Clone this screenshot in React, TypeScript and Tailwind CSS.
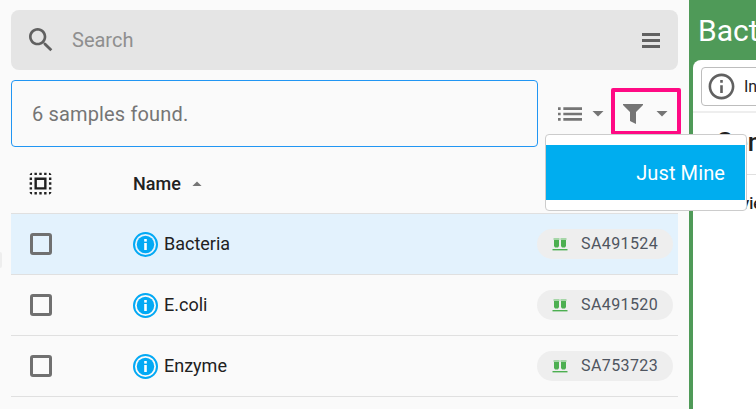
import React from 'react';

const samples = [
  { name: 'Bacteria', id: 'SA491524', selected: true },
  { name: 'E.coli', id: 'SA491520', selected: false },
  { name: 'Enzyme', id: 'SA753723', selected: false },
];

const Arrow = ({ className = '' }: { className?: string }) => (
  <svg viewBox="0 0 12 6" className={`w-[12px] h-[6px] shrink-0 ${className}`} fill="#757575">
    <path d="M0.5 0h11L6 5.5z" />
  </svg>
);

const InfoBadge = () => (
  <svg viewBox="0 0 25 25" className="w-[25px] h-[25px] shrink-0">
    <circle cx="12.5" cy="12.5" r="11.5" fill="none" stroke="#03a9f4" strokeWidth="2" />
    <circle cx="12.5" cy="12.5" r="8.7" fill="#03a9f4" />
    <rect x="11.2" y="11" width="2.6" height="7" fill="#fff" />
    <rect x="11.2" y="7" width="2.6" height="2.6" fill="#fff" />
  </svg>
);

const Tubes = () => (
  <svg viewBox="0 0 16 14" className="w-[16px] h-[14px] shrink-0">
    <path d="M2 3h5v6l-1 1.5H3L2 9zM9 3h5v6l-1 1.5h-3L9 9z" fill="#4caf50" />
    <rect x="1.5" y="1" width="6" height="2" fill="#a5d6a7" />
    <rect x="8.5" y="1" width="6" height="2" fill="#a5d6a7" />
    <rect x="0.5" y="12" width="15" height="1.4" fill="#4caf50" />
  </svg>
);

export default function App() {
  return (
    <div className="relative flex w-[756px] h-[409px] overflow-hidden bg-[#fafafa] font-['Roboto',sans-serif]">
      <div className="w-[689px] shrink-0 px-[11px] pt-[10px]">
        <div className="flex items-center h-[60px] rounded-[8px] bg-[#e5e5e5] pl-[14px] pr-[18px]">
          <svg viewBox="0 0 24 24" className="w-[32px] h-[32px] shrink-0" fill="#616161">
            <path d="M15.5 14h-.79l-.28-.27C15.41 12.59 16 11.11 16 9.5 16 5.91 13.09 3 9.5 3S3 5.91 3 9.5 5.91 16 9.5 16c1.61 0 3.09-.59 4.23-1.57l.27.28v.79l5 4.99L20.49 19l-4.99-5zm-6 0C7.01 14 5 11.99 5 9.5S7.01 5 9.5 5 14 7.01 14 9.5 11.99 14 9.5 14z" />
          </svg>
          <span className="ml-[15px] flex-1 text-[20px] text-[#8f8f8f]">Search</span>
          <div className="flex flex-col gap-[3px] w-[18px]">
            <div className="h-[3px] bg-[#616161]" />
            <div className="h-[3px] bg-[#616161]" />
            <div className="h-[3px] bg-[#616161]" />
          </div>
        </div>

        <div className="flex items-center mt-[10px] h-[67px]">
          <div className="flex items-center shrink-0 w-[527px] h-[67px] rounded-[4px] border border-[#2196f3] pl-[20px] text-[20px] tracking-[0.15px] text-[#757575]">
            6 samples found.
          </div>
          <div className="flex items-center shrink-0 ml-[16px] w-[57px]">
            <svg viewBox="0 0 24 24" className="w-[32px] h-[32px] shrink-0" fill="#757575">
              <path d="M3 13h2v-2H3v2zm0 4h2v-2H3v2zm0-8h2V7H3v2zm4 4h14v-2H7v2zm0 4h14v-2H7v2zM7 7v2h14V7H7z" />
            </svg>
            <Arrow className="ml-[6px]" />
          </div>
          <div className="flex items-center shrink-0 w-[70px] h-[47px] mt-[-4px] border-[4px] border-[#ff0a84] rounded-[2px] pl-[6px] pt-[4px]">
            <svg viewBox="0 0 24 24" className="w-[24px] h-[24px] shrink-0" fill="#757575">
              <path d="M2 2h20v1l-7 7v12l-6-3V10L2 3z" />
            </svg>
            <Arrow className="ml-[11px]" />
          </div>
        </div>

        <div className="flex items-center h-[67px] border-b border-[#e0e0e0] pl-[15px] pt-[6px]">
          <svg viewBox="0 0 24 24" className="w-[29px] h-[29px] shrink-0" fill="#212121">
            <path d="M3 5h2V3c-1.1 0-2 .9-2 2zm0 8h2v-2H3v2zm4 8h2v-2H7v2zM3 9h2V7H3v2zm10-6h-2v2h2V3zm6 0v2h2c0-1.1-.9-2-2-2zM5 21v-2H3c0 1.1.9 2 2 2zm-2-4h2v-2H3v2zM9 3H7v2h2V3zm2 18h2v-2h-2v2zm8-8h2v-2h-2v2zm0 8c1.1 0 2-.9 2-2h-2v2zm0-12h2V7h-2v2zm0 8h2v-2h-2v2zm-4 4h2v-2h-2v2zm0-16h2V3h-2v2zM7 17h10V7H7v10zm2-8h6v6H9V9z" />
          </svg>
          <span className="ml-[78px] text-[18px] font-medium text-[#212121]">Name</span>
          <Arrow className="ml-[11px] rotate-180 !w-[10px] !h-[5px]" />
        </div>

        {samples.map((s) => (
          <div
            key={s.id}
            className={`flex items-center h-[61px] border-b border-[#e0e0e0] pl-[19px] pr-[5px] ${s.selected ? 'bg-[#e3f2fd]' : ''}`}
          >
            <div className="w-[22px] h-[22px] rounded-[3px] border-[3px] border-[#707070] shrink-0" />
            <div className="ml-[81px] flex flex-1 items-center">
              <InfoBadge />
              <span className="ml-[6px] mt-[-2px] text-[18px] text-[#212121]">{s.name}</span>
            </div>
            <div className="flex items-center w-[136px] h-[30px] rounded-full bg-[#eeeeee] pl-[15px]">
              <Tubes />
              <span className="ml-[13px] text-[16px] tracking-[0.4px] text-[#4f5560]">{s.id}</span>
            </div>
          </div>
        ))}
      </div>

      <div className="flex-1 min-w-0 flex flex-col bg-[#4f9a58] overflow-hidden">
        <div className="h-[60px] pl-[9px] pt-[11px] text-[30px] leading-[40px] text-white whitespace-nowrap">Bacteria</div>
        <div className="flex-1 ml-[4px] rounded-tl-[8px] bg-white pl-[8px] pt-[7px]">
          <div className="flex items-center w-[100px] h-[39px] rounded-[4px] border border-[#bdbdbd] pl-[4px]">
            <svg viewBox="0 0 24 24" className="w-[31px] h-[31px] shrink-0" fill="#616161">
              <path d="M11 7h2v2h-2zm0 4h2v6h-2zm1-9C6.48 2 2 6.48 2 12s4.48 10 10 10 10-4.48 10-10S17.52 2 12 2zm0 18c-4.41 0-8-3.59-8-8s3.59-8 8-8 8 3.59 8 8-3.59 8-8 8z" />
            </svg>
            <span className="ml-[7px] text-[16px] text-[#212121] whitespace-nowrap">Info</span>
          </div>
        </div>
      </div>

      <div className="absolute left-0 top-[252px] w-[2px] h-[16px] rounded-r-[2px] bg-[#eeeeee]" />
      <div className="absolute left-[693px] top-[111px] w-[63px] h-[2px] bg-[#eeeeee]" />
      <div className="absolute left-[716px] top-[125px] text-[26px] leading-[34px] font-medium text-[#212121] whitespace-nowrap">General</div>
      <div className="absolute left-[693px] top-[174px] w-[63px] h-px bg-[#e0e0e0]" />
      <div className="absolute left-[708px] top-[194px] text-[16px] leading-[20px] font-medium text-[#212121] whitespace-nowrap">Overview</div>

      <div className="absolute left-[545px] top-[134px] w-[202px] h-[77px] rounded-[4px] border border-[#cccccc] bg-white pt-[10px]">
        <div className="flex items-center justify-end h-[55px] bg-[#00adef] pr-[20px] text-[20px] tracking-[0.1px] text-white mr-px">Just Mine</div>
      </div>
    </div>
  );
}
